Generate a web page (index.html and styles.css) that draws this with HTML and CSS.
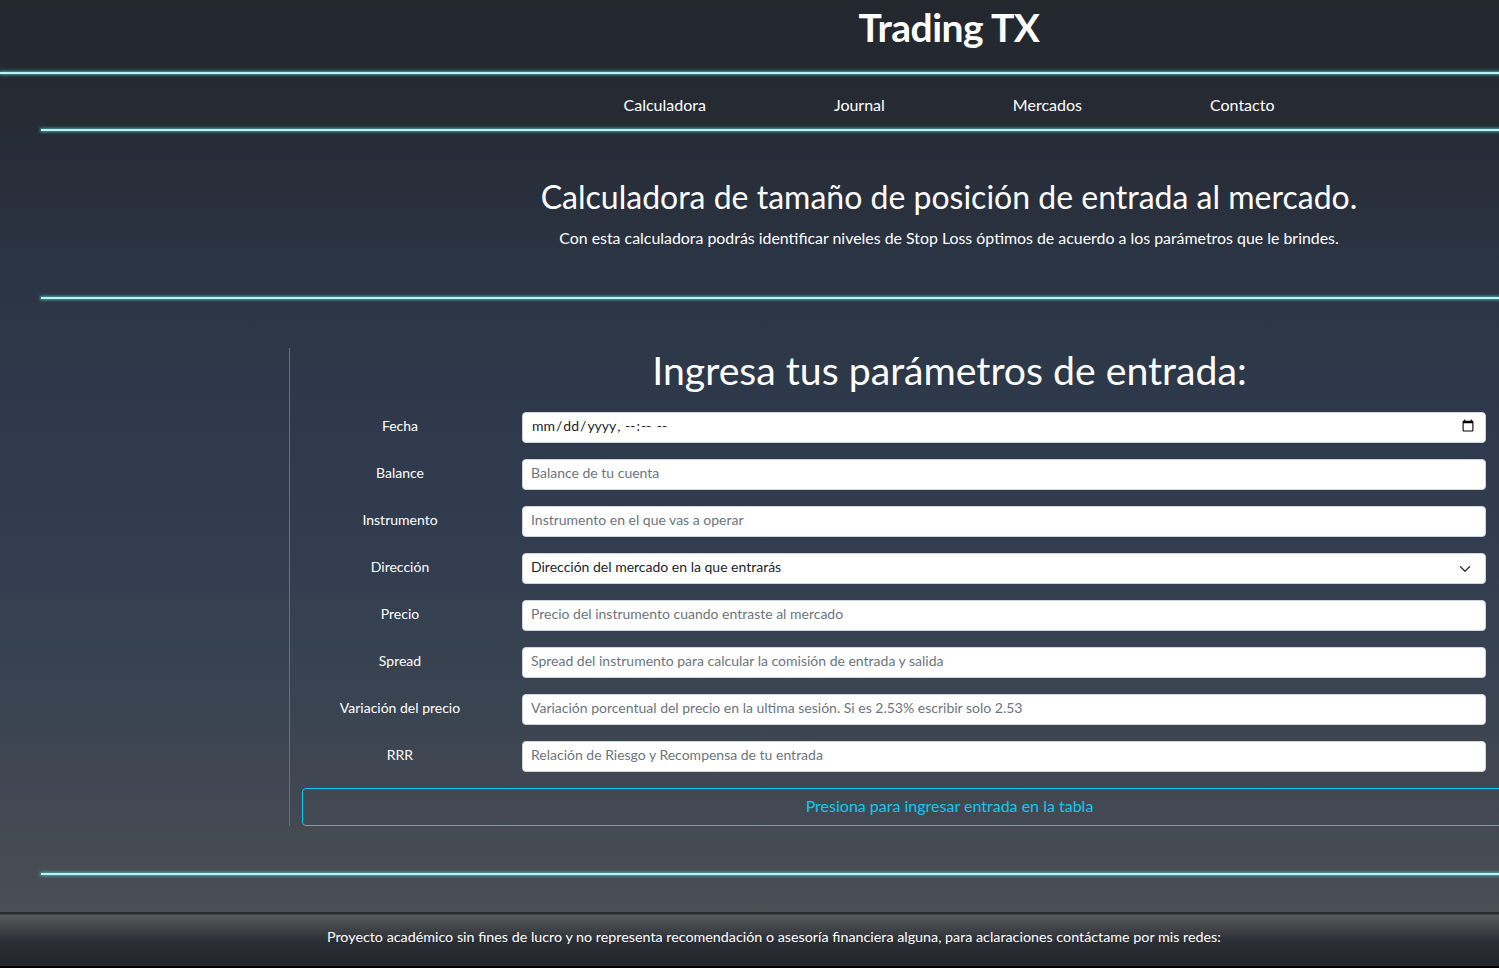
FILE: index.html
```html
<!DOCTYPE html>
<html lang="es">
<head>
<meta charset="utf-8">
<title>Trading TX</title>
<link rel="stylesheet" href="styles.css">
</head>
<body>
<div class="page">
  <header class="top">
    <h1 class="brand">Trading TX</h1>
  </header>
  <div class="glow glow-full"></div>
  <nav class="nav">
    <a href="#">Calculadora</a>
    <a href="#">Journal</a>
    <a href="#">Mercados</a>
    <a href="#">Contacto</a>
  </nav>
  <div class="glow glow-inset"></div>
  <section class="intro">
    <h2 class="intro-title">Calculadora de tamaño de posición de entrada al mercado.</h2>
    <p class="intro-text">Con esta calculadora podrás identificar niveles de Stop Loss óptimos de acuerdo a los parámetros que le brindes.</p>
  </section>
  <div class="glow glow-inset"></div>
  <main class="container">
    <h2 class="form-title">Ingresa tus parámetros de entrada:</h2>
    <form class="form">
      <div class="row">
        <label class="label">Fecha</label>
        <div class="field"><input class="control control-date" type="datetime-local"></div>
      </div>
      <div class="row">
        <label class="label">Balance</label>
        <div class="field"><input class="control" type="text" placeholder="Balance de tu cuenta"></div>
      </div>
      <div class="row">
        <label class="label">Instrumento</label>
        <div class="field"><input class="control" type="text" placeholder="Instrumento en el que vas a operar"></div>
      </div>
      <div class="row">
        <label class="label">Dirección</label>
        <div class="field select-wrap">
          <select class="control control-select">
            <option>Dirección del mercado en la que entrarás</option>
            <option>Compra</option>
            <option>Venta</option>
          </select>
          <svg class="chevron" viewBox="0 0 16 16" width="16" height="12"><path d="M2 5l6 6 6-6" fill="none" stroke="#343a40" stroke-width="2" stroke-linecap="round" stroke-linejoin="round"/></svg>
        </div>
      </div>
      <div class="row">
        <label class="label">Precio</label>
        <div class="field"><input class="control" type="text" placeholder="Precio del instrumento cuando entraste al mercado"></div>
      </div>
      <div class="row">
        <label class="label">Spread</label>
        <div class="field"><input class="control" type="text" placeholder="Spread del instrumento para calcular la comisión de entrada y salida"></div>
      </div>
      <div class="row">
        <label class="label">Variación del precio</label>
        <div class="field"><input class="control" type="text" placeholder="Variación porcentual del precio en la ultima sesión. Si es 2.53% escribir solo 2.53"></div>
      </div>
      <div class="row">
        <label class="label">RRR</label>
        <div class="field"><input class="control" type="text" placeholder="Relación de Riesgo y Recompensa de tu entrada"></div>
      </div>
      <button class="submit" type="button">Presiona para ingresar entrada en la tabla</button>
    </form>
  </main>
  <div class="glow glow-inset glow-bottom"></div>
  <footer class="footer">
    <p class="footer-text">Proyecto académico sin fines de lucro y no representa recomendación o asesoría financiera alguna, para aclaraciones contáctame por mis redes:</p>
  </footer>
</div>
</body>
</html>
```
FILE: styles.css
```css
html, body {
  margin: 0;
  padding: 0;
  background: #000;
  overflow: hidden;
}

body {
  font-family: Lato, "Open Sans", "Liberation Sans", sans-serif;
  color: #fff;
}

.page {
  width: 1898px;
  height: 966px;
  background: linear-gradient(180deg, #23272e 0px, #262b34 120px, #2b3443 260px, #2e3a4c 420px, #323e50 560px, #3b4451 720px, #464b53 850px, #4a4e55 912px);
}

.top {
  height: 72px;
}

.brand {
  margin: 0;
  text-align: center;
  font-size: 39px;
  font-weight: 700;
  line-height: 54px;
  color: #fff;
  letter-spacing: -0.5px;
}

.glow {
  height: 2px;
  background: #b8f4f1;
  box-shadow: 0 0 3px 1px rgba(86, 196, 200, 0.75);
}

.glow-inset {
  margin: 0 41px;
}

.nav {
  display: flex;
  justify-content: center;
  gap: 128px;
  padding: 20px 0 13px;
}

.nav a {
  color: #fff;
  text-decoration: none;
  font-size: 16px;
  line-height: 22px;
}

.intro {
  padding: 46px 0 47px;
  text-align: center;
}

.intro-title {
  margin: 0;
  font-size: 32px;
  font-weight: 400;
  line-height: 40px;
}

.intro-text {
  margin: 9px 0 0;
  font-size: 15.9px;
  line-height: 24px;
}

.container {
  width: 1320px;
  margin: 49px auto 0;
  box-sizing: border-box;
  border-left: 1px solid #66707e;
  padding-left: 12px;
}

.form-title {
  margin: 0 0 21px -12px;
  text-align: center;
  font-size: 39.2px;
  font-weight: 400;
  line-height: 43px;
}

.form {
  display: flex;
  flex-direction: column;
  gap: 16px;
}

.row {
  display: flex;
  align-items: center;
}

.label {
  width: 196px;
  text-align: center;
  font-size: 14px;
  line-height: 20px;
  margin-right: 24px;
  padding-bottom: 4px;
}

.field {
  width: 964px;
}

.select-wrap {
  position: relative;
}

.chevron {
  position: absolute;
  right: 13px;
  top: 10px;
}

.control {
  display: block;
  width: 100%;
  box-sizing: border-box;
  height: 31px;
  padding: 2px 8px 6px;
  font-family: Lato, "Open Sans", "Liberation Sans", sans-serif;
  font-size: 14px;
  color: #212529;
  background: #fff;
  border: 1px solid #ced4da;
  border-radius: 4px;
  outline: none;
}

.control::placeholder {
  color: #6c757d;
}

.control-select {
  appearance: none;
  -webkit-appearance: none;
  padding-right: 32px;
}

.submit {
  display: block;
  width: 1295px;
  height: 38px;
  box-sizing: border-box;
  padding: 0 0 4px;
  background: transparent;
  border: 1px solid #0dcaf0;
  border-radius: 4px;
  color: #0dcaf0;
  font-family: Lato, "Open Sans", "Liberation Sans", sans-serif;
  font-size: 16px;
  cursor: pointer;
}

.glow-bottom {
  margin-top: 47px;
}

.footer {
  margin-top: 37px;
  height: 54px;
  background: linear-gradient(180deg, #2a2b2d 0px, #2a2b2d 2px, #58595b 3px, #44474b 14px, #2a2d33 30px, #22252c 54px);
}

.footer-text {
  margin: 0;
  padding: 14px 0 0 327px;
  font-size: 14.3px;
  line-height: 22px;
}
```
